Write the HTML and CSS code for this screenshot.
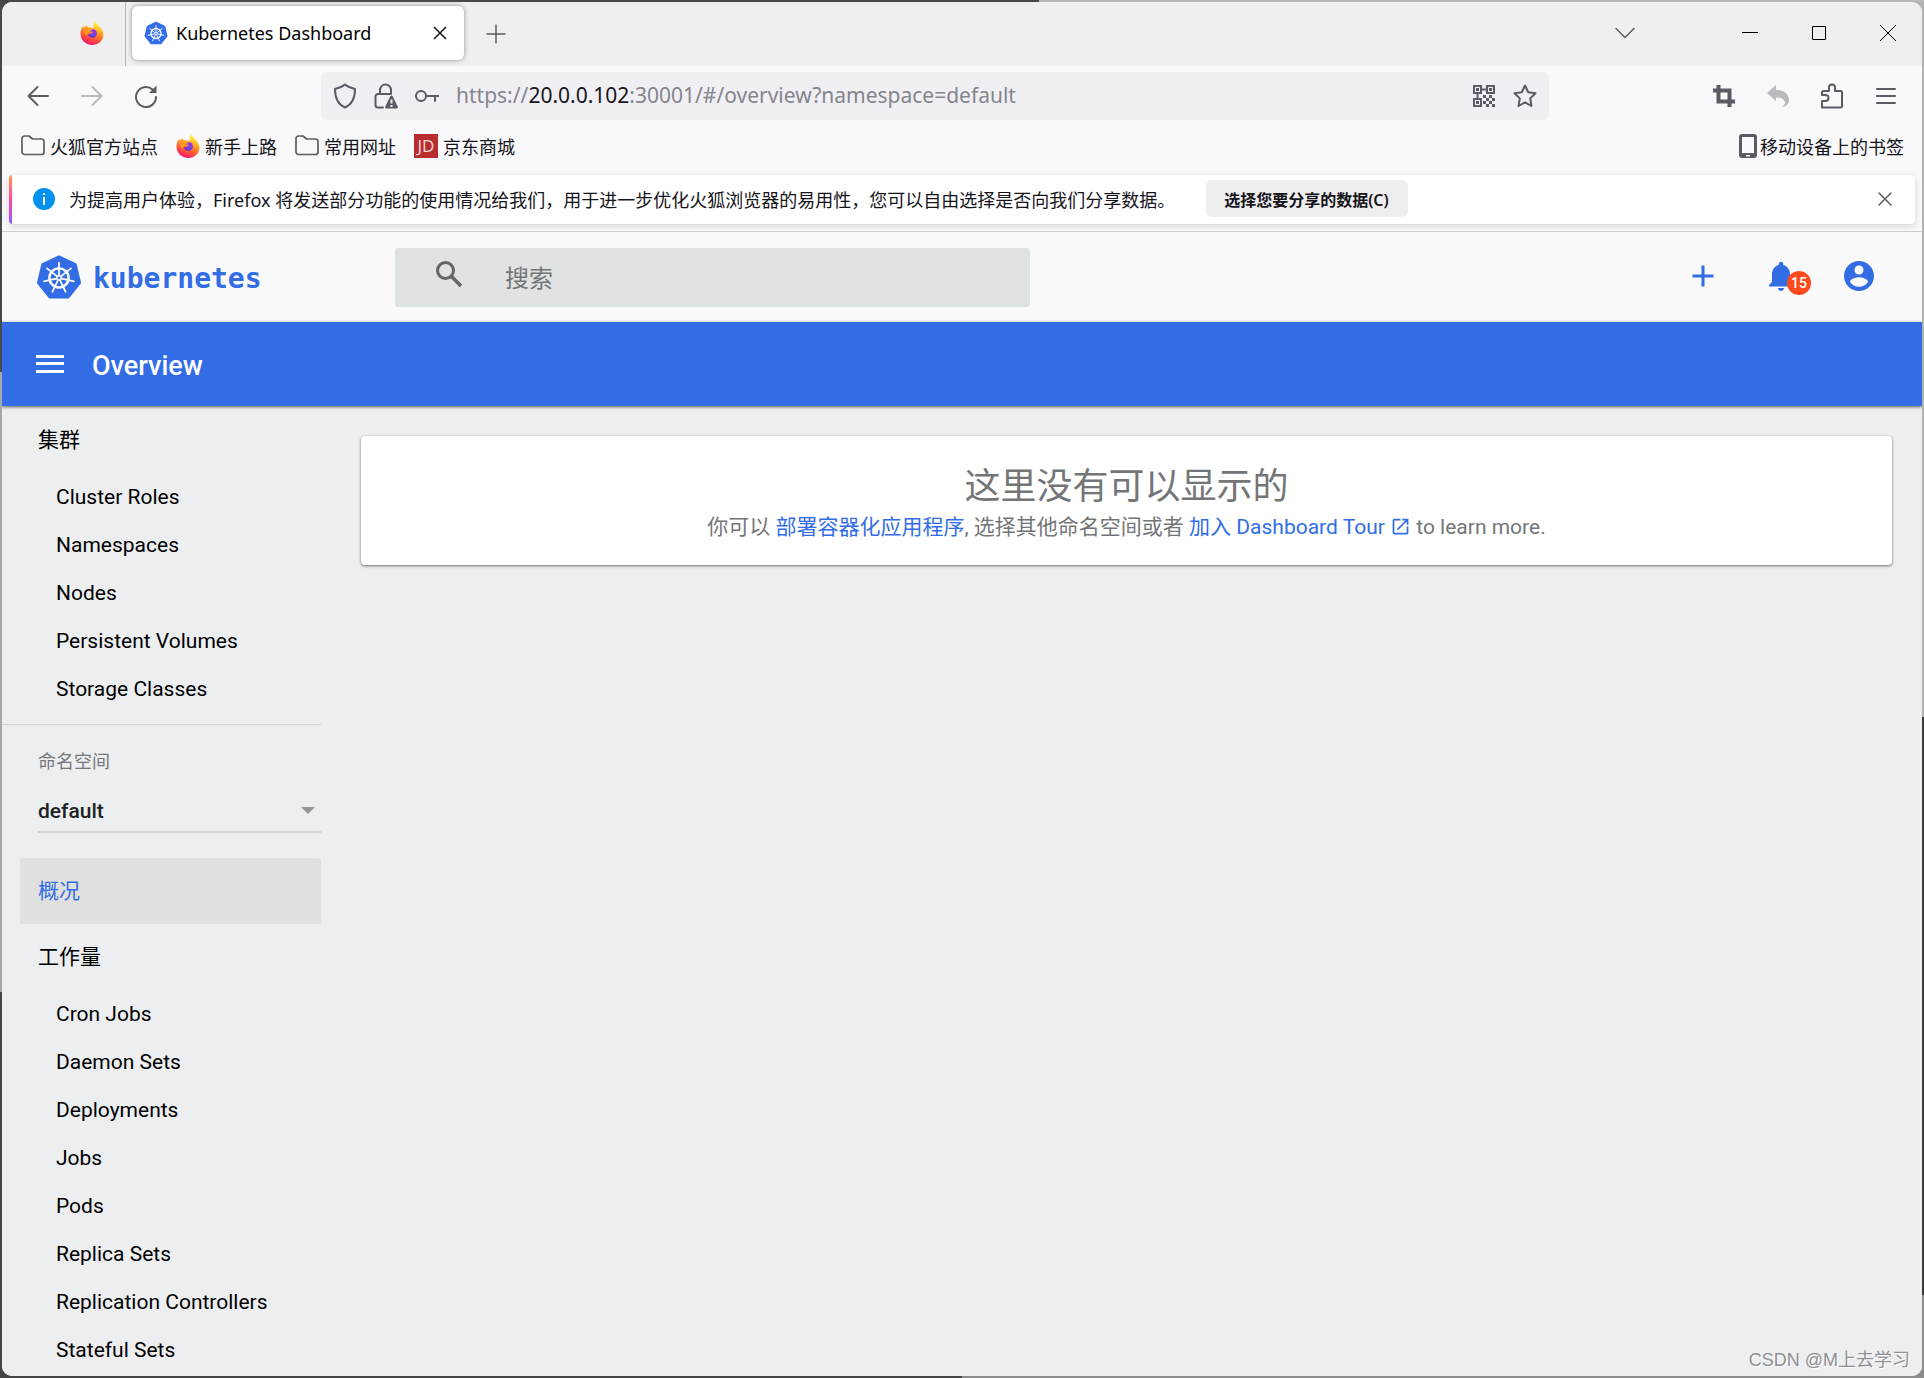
FILE: index.html
```html
<!DOCTYPE html>
<html lang="zh-CN">
<head>
<meta charset="utf-8">
<title>Kubernetes Dashboard</title>
<link rel="stylesheet" href="styles.css">
</head>
<body>
<svg class="defs" aria-hidden="true">
  <defs>
    <linearGradient id="fx-body" x1="0.75" y1="0" x2="0.35" y2="1">
      <stop offset="0.1" stop-color="#fff44f"/>
      <stop offset="0.4" stop-color="#ffa51e"/>
      <stop offset="0.68" stop-color="#ff5a36"/>
      <stop offset="1" stop-color="#f5156c"/>
    </linearGradient>
    <radialGradient id="fx-globe" cx="0.6" cy="0.3" r="0.8">
      <stop offset="0" stop-color="#a833e1"/>
      <stop offset="0.5" stop-color="#7542e5"/>
      <stop offset="1" stop-color="#5a2ab5"/>
    </radialGradient>
    <symbol id="firefox" viewBox="0 0 24 24">
      <path fill="url(#fx-body)" d="M13.500 3.600C14 2 15 .8 16.200 0c0 2.400 1.600 3.800 3.200 5.400C21 7 23.500 9.600 23.500 13.500 23.500 19.500 18.400 24 12.200 24 5.700 24 .5 19.200.5 12.800.5 9.500 1.700 6.600 3.400 4.600c0 1 .1 1.800.4 2.400.7-1.300 2-2.300 3.300-2.800C7 5 7.100 5.800 7.500 6.300c2.500-.3 4.300 0 6 1z"/>
      <path fill="url(#fx-globe)" d="M12.600 8c2.700.1 4.300 2.100 4.300 4.400s-2 4.400-4.500 4.400c-2.600 0-4.500-1.900-4.500-4.100 1 .7 2.200.6 3 0 .8-.6 1.600-.5 1.700-1.100 0-.6-.9-1-1.800-1.100-1-.1-1.300-.9-1.900-1.100.7-1 2.100-1.400 3.700-1.400z"/>
      <path fill="#ff9a22" d="M3.800 8.200c1.300-1.500 3.200-2 4.900-1.500 1.400.4 2.300 1.300 3.900 1.500-.3 1-1.600 1.300-2.300 1.800-.7.600-.6 1.500-1.500 2.100-1 .6-1.800 0-2 .6-.2.500 0 1.200.3 1.700-2.300-1-3.400-3.500-3.300-6.200z"/>
    </symbol>
    <symbol id="k8s" viewBox="0 0 48 48">
      <path fill="#326de6" stroke="#326de6" stroke-width="3" stroke-linejoin="round" d="M24 3 41 11 45.500 30 33.500 45H14.500L2.500 30 7 11z"/>
      <g fill="none" stroke="#fff">
        <circle cx="24" cy="25" r="10" stroke-width="2.600"/>
        <g stroke-width="1.800" stroke-linecap="round">
          <path d="M24 22V9"/>
          <path d="M24 22V9" transform="rotate(51.430 24 25)"/>
          <path d="M24 22V9" transform="rotate(102.860 24 25)"/>
          <path d="M24 22V9" transform="rotate(154.290 24 25)"/>
          <path d="M24 22V9" transform="rotate(205.710 24 25)"/>
          <path d="M24 22V9" transform="rotate(257.140 24 25)"/>
          <path d="M24 22V9" transform="rotate(308.570 24 25)"/>
        </g>
        <circle cx="24" cy="25" r="2.200" stroke-width="1.600"/>
      </g>
    </symbol>
    <symbol id="folder" viewBox="0 0 24 24">
      <path fill="none" stroke="#5b5b66" stroke-width="1.700" stroke-linejoin="round" d="M1 4.500A2.500 2.500 0 0 1 3.500 2H8l3.500 3H20.500A2.500 2.500 0 0 1 23 7.500v10.500a2.500 2.500 0 0 1-2.500 2.500h-17A2.500 2.500 0 0 1 1 18z"/>
    </symbol>
  </defs>
</svg>

<div class="window">
  <div class="tabstrip">
    <button class="fx-button" aria-label="Firefox"><svg width="24" height="24"><use href="#firefox"/></svg></button>
    <div class="tab">
      <svg width="24" height="24"><use href="#k8s"/></svg>
      <span class="tab-title">Kubernetes Dashboard</span>
      <button class="icon-button" aria-label="关闭标签页"><svg width="24" height="24" viewBox="0 0 24 24"><path class="dark" d="M6 6l12 12M18 6 6 18"/></svg></button>
    </div>
    <button class="icon-button new-tab" aria-label="新建标签页"><svg width="24" height="24" viewBox="0 0 24 24"><path class="line" d="M12 3v18M3 12h18"/></svg></button>
    <div class="window-controls">
      <button class="list-tabs" aria-label="列出所有标签页"><svg width="24" height="24" viewBox="0 0 24 24"><path class="line" d="M3 7.500l9 9 9-9"/></svg></button>
      <button aria-label="最小化"><svg width="24" height="24" viewBox="0 0 24 24"><path class="thin" d="M4 11.500h16"/></svg></button>
      <button aria-label="最大化"><svg width="24" height="24" viewBox="0 0 24 24"><path class="thin" d="M5.500 5.500h13v13h-13z"/></svg></button>
      <button aria-label="关闭"><svg width="24" height="24" viewBox="0 0 24 24"><path class="thin" d="M4 4l16 16M20 4 4 20"/></svg></button>
    </div>
  </div>

  <div class="toolbar">
    <div class="nav-buttons">
      <button class="icon-button" aria-label="后退"><svg width="24" height="24" viewBox="0 0 24 24"><path class="line bold" d="M22 12H3M11.500 3 2.500 12l9 9"/></svg></button>
      <button class="icon-button faded" aria-label="前进"><svg width="24" height="24" viewBox="0 0 24 24"><path class="line bold" d="M2 12h19M12.500 3l9 9-9 9"/></svg></button>
      <button class="icon-button" aria-label="刷新"><svg width="24" height="24" viewBox="0 0 24 24"><path class="line bold" d="M22 13a10 10 0 1 1-3.500-7.600"/><path fill="#5b5b66" d="M22.500 1.500v7.500h-7.500z"/></svg></button>
    </div>
    <div class="urlbar">
      <svg width="24" height="26" viewBox="0 0 24 26"><path class="line bold" d="M12 1.500c3 2.500 6 3.500 10 4.500 0 9-3 15.500-10 18.500C5 21.500 2 15 2 6c4-1 7-2 10-4.500z"/></svg>
      <svg width="24" height="26" viewBox="0 0 24 26"><path class="line bold" d="M6 11V7a5.500 5.500 0 0 1 11 0v4M9 24.500H4A2.500 2.500 0 0 1 1.500 22v-8.500A2.500 2.500 0 0 1 4 11h13"/><path fill="#5b5b66" d="M17.500 12.500c.5 0 .9.300 1.200.8l5 10.200c.4.900-.1 2-1.200 2h-10c-1 0-1.700-1.100-1.200-2l5-10.200c.3-.5.700-.8 1.200-.8z"/><path stroke="#f0f0f4" stroke-width="2" d="M17.500 16.500v4M17.500 22v2"/></svg>
      <svg class="key" width="24" height="26" viewBox="0 0 24 26"><circle class="line bold" cx="6" cy="13" r="5"/><path class="line bold" d="M11 13h12.500M20 13v5"/></svg>
      <div class="url" role="textbox" aria-label="地址">https://<b>20.0.0.102</b>:30001/#/overview?namespace=default</div>
      <svg width="24" height="24" viewBox="0 0 24 24"><path class="line qr" d="M2 2h7v7H2zM15 2h7v7h-7zM2 15h7v7H2zM9 5.500h6M5.500 9v6"/><path fill="#5b5b66" d="M4 4h3v3H4zM17 4h3v3h-3zM4 17h3v3H4zM11 11h3v3h-3zM17 11h3v3h-3zM14 14h3v3h-3zM20 14h3v3h-3zM11 17h3v3h-3zM17 17h3v3h-3zM14 20h3v3h-3zM20 20h3v3h-3z"/></svg>
      <button class="icon-button star" aria-label="为此页添加书签"><svg width="24" height="24" viewBox="0 0 24 24"><path class="line bold" d="M12 1.500l3.200 6.700 7.300 1-5.300 5.200 1.300 7.600-6.500-3.600L5.500 22l1.300-7.600L1.500 9.200l7.300-1z"/></svg></button>
    </div>
    <div class="tool-buttons">
      <button class="icon-button" aria-label="截图"><svg width="24" height="24" viewBox="0 0 24 24"><path fill="none" stroke="#5b5b66" stroke-width="4" d="M1 6.500h16.500V23M6.500 1v16.500H23"/></svg></button>
      <button class="icon-button faded" aria-label="撤销"><svg width="24" height="24" viewBox="0 0 24 24"><path fill="#5b5b66" d="M1 9l9-8v5c8 0 13 4 13 10 0 4-3 7-8 7 4-2 4.500-4 3.500-6-1.200-2.400-4-3.500-8.500-3.500V17z"/></svg></button>
      <button class="icon-button" aria-label="扩展"><svg width="24" height="26" viewBox="0 0 24 26"><path class="line bold" d="M2 24.500V18h3.500a2.500 2.500 0 0 0 0-6H2V9.500A1.500 1.500 0 0 1 3.500 8H9V4.500a3 3 0 0 1 6 0V8h5.500A1.500 1.500 0 0 1 22 9.500v13.500a1.500 1.500 0 0 1-1.500 1.500z"/></svg></button>
      <button class="icon-button" aria-label="菜单"><svg width="24" height="24" viewBox="0 0 24 24"><path class="line bold" d="M3 5h18M3 12h18M3 19h18"/></svg></button>
    </div>
  </div>

  <nav class="bookmarks">
    <a href="#"><svg width="24" height="24"><use href="#folder"/></svg>火狐官方站点</a>
    <a href="#"><svg width="24" height="24"><use href="#firefox"/></svg>新手上路</a>
    <a href="#"><svg width="24" height="24"><use href="#folder"/></svg>常用网址</a>
    <a href="#"><span class="jd">JD</span>京东商城</a>
    <a class="mobile" href="#"><svg width="18" height="24" viewBox="0 0 18 24"><rect width="18" height="24" rx="3" fill="#5b5b66"/><path fill="#f9f9fb" d="M3 3h12v16H3zM7 21h4v1.500H7z"/></svg>移动设备上的书签</a>
  </nav>

  <div class="notice">
    <svg width="22" height="22" viewBox="0 0 22 22"><circle cx="11" cy="11" r="11" fill="#0090ed"/><path stroke="#fff" stroke-width="2" d="M11 9v8M11 5v2"/></svg>
    <span>为提高用户体验，Firefox 将发送部分功能的使用情况给我们，用于进一步优化火狐浏览器的易用性，您可以自由选择是否向我们分享数据。</span>
    <button class="share">选择您要分享的数据(C)</button>
    <button class="icon-button dismiss" aria-label="关闭通知"><svg width="24" height="24" viewBox="0 0 24 24"><path class="line" d="M6 6l12 12M18 6 6 18"/></svg></button>
  </div>

  <div class="page">
    <header class="app-header">
      <a class="brand" href="#"><svg width="46" height="46"><use href="#k8s"/></svg><span>kubernetes</span></a>
      <label class="search">
        <svg width="28" height="28" viewBox="0 0 28 28"><circle cx="10.500" cy="10.500" r="8" fill="none" stroke="#666" stroke-width="3"/><path stroke="#666" stroke-width="3.500" d="M16 16l10 10"/></svg>
        <input type="search" placeholder="搜索" aria-label="搜索">
      </label>
      <div class="header-actions">
        <button aria-label="创建"><svg width="36" height="36" viewBox="0 0 24 24"><path fill="#326de6" d="M19 13h-6v6h-2v-6H5v-2h6V5h2v6h6v2z"/></svg></button>
        <button class="bell" aria-label="通知"><svg width="36" height="36" viewBox="0 0 24 24"><path fill="#326de6" d="M12 22c1.100 0 2-.9 2-2h-4c0 1.100.89 2 2 2zm6-6v-5c0-3.070-1.640-5.640-4.500-6.320V4c0-.83-.67-1.500-1.500-1.500s-1.500.67-1.500 1.500v.68C7.630 5.360 6 7.920 6 11v5l-2 2v1h16v-1l-2-2z"/></svg><span class="badge">15</span></button>
        <button aria-label="用户"><svg width="36" height="36" viewBox="0 0 24 24"><path fill="#326de6" d="M12 2C6.480 2 2 6.480 2 12s4.480 10 10 10 10-4.480 10-10S17.520 2 12 2zm0 3c1.660 0 3 1.340 3 3s-1.340 3-3 3-3-1.340-3-3 1.340-3 3-3zm0 14.200c-2.500 0-4.710-1.280-6-3.220.03-1.990 4-3.080 6-3.080 1.990 0 5.970 1.090 6 3.080-1.290 1.940-3.500 3.220-6 3.220z"/></svg></button>
      </div>
    </header>
    <div class="title-bar">
      <button aria-label="导航菜单"><svg width="28" height="18" viewBox="0 0 28 18"><path fill="#fff" d="M0 0h28v3H0zM0 7h28v3H0zM0 15h28v3H0z"/></svg></button>
      <h1>Overview</h1>
    </div>
    <div class="content">
      <nav class="sidebar">
        <a class="group" href="#">集群</a>
        <ul>
          <li><a href="#">Cluster Roles</a></li>
          <li><a href="#">Namespaces</a></li>
          <li><a href="#">Nodes</a></li>
          <li><a href="#">Persistent Volumes</a></li>
          <li><a href="#">Storage Classes</a></li>
        </ul>
        <div class="namespace">
          <label for="ns">命名空间</label>
          <div class="select">
            <select id="ns"><option>default</option></select>
            <svg width="14" height="7" viewBox="0 0 14 7"><path fill="#949596" d="M0 0h14L7 7z"/></svg>
          </div>
        </div>
        <a class="active" href="#">概况</a>
        <a class="group" href="#">工作量</a>
        <ul>
          <li><a href="#">Cron Jobs</a></li>
          <li><a href="#">Daemon Sets</a></li>
          <li><a href="#">Deployments</a></li>
          <li><a href="#">Jobs</a></li>
          <li><a href="#">Pods</a></li>
          <li><a href="#">Replica Sets</a></li>
          <li><a href="#">Replication Controllers</a></li>
          <li><a href="#">Stateful Sets</a></li>
        </ul>
      </nav>
      <main>
        <section class="card">
          <h2>这里没有可以显示的</h2>
          <p>你可以 <a href="#">部署容器化应用程序</a>, 选择其他命名空间或者 <a href="#">加入 Dashboard Tour <svg width="21" height="21" viewBox="0 0 24 24"><path fill="#326de6" d="M19 19H5V5h7V3H5a2 2 0 0 0-2 2v14a2 2 0 0 0 2 2h14c1.100 0 2-.9 2-2v-7h-2v7zM14 3v2h3.590l-9.830 9.830 1.410 1.410L19 6.410V10h2V3h-7z"/></svg></a> to learn more.</p>
        </section>
      </main>
    </div>
  </div>
  <div class="watermark">CSDN @M上去学习</div>
</div>
</body>
</html>
```
FILE: styles.css
```css
* { box-sizing: border-box; }

body {
  margin: 0;
  height: 100vh;
  padding: 2px;
  overflow: hidden;
  background:
    linear-gradient(90deg, #48484a 54%, #b8b8b8 54%) top / 100% 2px no-repeat,
    linear-gradient(#48484a 27%, #a8a8aa 27%, #a8a8aa 72%, #444446 72%) left / 50% 100% no-repeat,
    linear-gradient(#b2b2b2 52%, #3a3a3c 52%, #3a3a3c 94%, #8c8c8e 94%) right / 50% 100% no-repeat;
  font-family: "Noto Sans", "Noto Sans CJK SC", sans-serif;
  font-size: 18px;
  color: #15141a;
}

.defs { position: absolute; width: 0; height: 0; }
svg { flex: none; display: block; }
a { color: inherit; text-decoration: none; }

button {
  border: 0;
  padding: 0;
  background: none;
  font: inherit;
  color: inherit;
  flex: none;
}

.line { fill: none; stroke: #5b5b66; stroke-width: 1.5; stroke-linejoin: round; stroke-linecap: round; }
.bold { stroke-width: 2; }
.qr { stroke-width: 2; stroke-linejoin: miter; }
.dark { fill: none; stroke: #15141a; stroke-width: 1.5; }
.thin { fill: none; stroke: #000; stroke-width: 1; }
.faded { opacity: .4; }

.window {
  position: relative;
  height: 100%;
  display: flex;
  flex-direction: column;
  border-radius: 10px;
  overflow: hidden;
  background: #f9f9fb;
}

/* tab strip */
.tabstrip {
  flex: none;
  display: flex;
  align-items: center;
  height: 64px;
  background: #efefef;
}
.fx-button {
  align-self: stretch;
  width: 124px;
  padding: 0 0 2px 78px;
  border-right: 1px solid #b5b5b8;
}
.tab {
  display: flex;
  align-items: center;
  width: 332px;
  height: 54px;
  margin: 0 20px 2px 6px;
  padding: 0 12px;
  border-radius: 6px;
  background: #fff;
  box-shadow: 0 0 5px rgba(0, 0, 0, .4);
}
.tab-title { flex: 1; margin-left: 8px; color: #000; }
.window-controls { display: flex; margin-left: auto; padding: 0 22px 2px 0; gap: 45px; }
.list-tabs { margin-right: 56px; }

/* toolbar */
.toolbar {
  flex: none;
  display: flex;
  align-items: center;
  height: 60px;
  padding: 0 24px;
}
.nav-buttons, .tool-buttons { display: flex; align-items: center; gap: 30px; }
.urlbar {
  flex: 1;
  display: flex;
  align-items: center;
  gap: 17px;
  height: 48px;
  margin: 0 163px;
  padding: 0 12px;
  border-radius: 6px;
  background: #f0f0f4;
}
.url { flex: 1; font-size: 21px; line-height: 46px; height: 48px; color: #85858c; }
.url b { font-weight: 400; color: #15141a; }

/* bookmarks */
.bookmarks {
  flex: none;
  display: flex;
  align-items: center;
  gap: 18px;
  height: 40px;
  padding: 0 18px 0 19px;
}
.bookmarks a { display: flex; align-items: center; gap: 5px; }
.bookmarks .mobile { margin-left: auto; gap: 3px; }
.jd {
  width: 24px;
  height: 24px;
  background: #b92d2d;
  color: #f6dede;
  font: 17px/24px "Open Sans", sans-serif;
  text-align: center;
}

/* notification */
.notice {
  flex: none;
  display: flex;
  align-items: center;
  height: 49px;
  margin: 7px;
  margin-top: 9px;
  padding: 0 18px 2px 24px;
  border-radius: 4px;
  background: linear-gradient(#ff9a4a, #ff4aa2 50%, #9059ff) left / 3px 100% no-repeat #fff;
  box-shadow: 0 2px 6px rgba(58, 57, 68, .2);
  white-space: nowrap;
}
.notice span { margin-left: 14px; }
.share {
  height: 37px;
  margin-left: 31px;
  padding: 0 19px 0 18px;
  border-radius: 6px;
  background: #eee;
  font-size: 16px;
  font-weight: 600;
}
.dismiss { margin-left: auto; }

/* dashboard */
.page {
  flex: 1;
  min-height: 0;
  display: flex;
  flex-direction: column;
  border-top: 1px solid #ccc;
  overflow: hidden;
  background: #eceef0;
  font-family: Roboto, "Noto Sans CJK SC", sans-serif;
  font-size: 21px;
}
.app-header {
  flex: none;
  display: flex;
  align-items: center;
  height: 90px;
  padding: 0 45px 0 34px;
  background: #fafafa;
}
.brand {
  display: flex;
  align-items: center;
  gap: 11px;
  width: 359px;
  color: #326de6;
  font: bold 28px "DejaVu Sans Mono", monospace;
}
.brand span { padding-top: 2px; }
.search {
  display: flex;
  align-items: center;
  gap: 42px;
  width: 34.5%;
  height: 59px;
  padding: 0 40px;
  border-radius: 3px;
  background: #dfe3e4;
}
.search svg { margin-bottom: 6px; }
.search input {
  flex: 1;
  min-width: 0;
  border: 0;
  padding: 4px 0 0;
  background: none;
  outline: 0;
  font: inherit;
  font-size: 24px;
}
.search input::placeholder { color: #747676; opacity: 1; }
.header-actions { display: flex; gap: 42px; margin-left: auto; padding-bottom: 2px; }
.bell { position: relative; }
.badge {
  position: absolute;
  right: -12px;
  bottom: -1px;
  width: 24px;
  height: 24px;
  border-radius: 50%;
  background: #ff4a1c;
  color: #fff;
  font: 500 14px/24px Roboto, sans-serif;
}

.title-bar {
  flex: none;
  display: flex;
  align-items: center;
  gap: 28px;
  height: 84px;
  padding: 0 34px;
  background: #326de6;
  box-shadow: 0 1px 3px rgba(0, 0, 0, .6);
  color: #fff;
  position: relative;
}
h1 { margin: 0; padding-top: 3px; font-size: 27px; font-weight: 500; }

.content { flex: 1; min-height: 0; display: flex; }
.sidebar { flex: none; width: 319px; padding-top: 1px; color: #000; }
.group { display: block; padding: 0 36px; line-height: 66px; }
.sidebar ul { margin: 0; padding: 0; list-style: none; }
.sidebar li a {
  display: block;
  padding-left: 54px;
  line-height: 48px;
}
.namespace {
  margin-top: 11px;
  padding: 23px 0 25px 36px;
  border-top: 1px solid #cfd1d4;
}
.namespace label { display: block; font-size: 18px; line-height: 28px; color: #76777a; }
.select {
  display: flex;
  align-items: center;
  height: 57px;
  padding: 14px 6px 0 0;
  border-bottom: 2px solid #cfd1d4;
}
select {
  flex: 1;
  appearance: none;
  border: 0;
  padding: 0;
  background: none;
  font: 500 21px Roboto, sans-serif;
  color: #212223;
}
.active {
  display: block;
  margin-left: 18px;
  padding-left: 18px;
  border-radius: 3px;
  background: #e0e0e0;
  color: #326de6;
  line-height: 66px;
}

main { flex: 1; padding: 30px 30px 30px 40px; }
.card {
  padding: 26px 24px 22px;
  border-radius: 4px;
  background: #fff;
  box-shadow: 0 1px 3px rgba(0, 0, 0, .55);
  color: #737577;
  text-align: center;
}
h2 { margin: 0; font-size: 36px; font-weight: 400; line-height: 50px; }
p { margin: 0; line-height: 31px; }
.card a { color: #326de6; }
.card a svg { display: inline-block; vertical-align: -3px; }

.watermark {
  position: absolute;
  right: 12px;
  bottom: 2px;
  font: 18px/28px "Liberation Sans", "Noto Sans CJK SC", sans-serif;
  color: #8f9092;
  text-shadow: 1px 1px 0 #fff;
}
```
